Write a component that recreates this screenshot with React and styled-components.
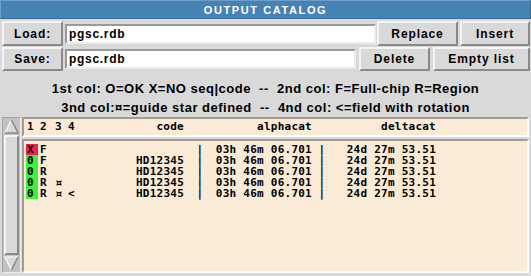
import React from 'react';
import styled, { createGlobalStyle } from 'styled-components';

const GlobalStyle = createGlobalStyle`
  body {
    margin: 0;
    background: #d9d9d9;
  }
`;

// column widths shared by header and rows (px)
const COLS = {
  flag: 12,
  gapA: 2,
  c2: 15,
  c3: 13,
  c4: 12,
  code: 104,
  bar1: 32,
  alpha: 96,
  bar2: 20,
  delta: 104,
};

const rows = [
  { flag: 'X', ok: false, c2: 'F', c3: '', c4: '', code: '' },
  { flag: '0', ok: true, c2: 'F', c3: '', c4: '', code: 'HD12345' },
  { flag: '0', ok: true, c2: 'R', c3: '', c4: '', code: 'HD12345' },
  { flag: '0', ok: true, c2: 'R', c3: '¤', c4: '', code: 'HD12345' },
  { flag: '0', ok: true, c2: 'R', c3: '¤', c4: '<', code: 'HD12345' },
];

const Window = styled.div`
  width: 531px;
  height: 276px;
  display: flex;
  flex-direction: column;
  background: #d9d9d9;
  font-family: 'Liberation Sans', Arial, sans-serif;
  overflow: hidden;
`;

const TitleBar = styled.div`
  height: 17px;
  background: #4682b4;
  border: 1px solid #6f9fc8;
  border-right-color: #3a6d96;
  border-bottom-color: #3a6d96;
  color: #ffffff;
  font-weight: bold;
  font-size: 11px;
  letter-spacing: 1.6px;
  display: flex;
  align-items: center;
  justify-content: center;
`;

const FileRow = styled.div`
  display: flex;
  align-items: center;
  gap: 2px;
  padding: 0 1px 0 2px;
  margin-top: ${({ $top }) => $top}px;
  height: ${({ $h }) => $h}px;
`;

const Button = styled.div`
  box-sizing: border-box;
  width: ${({ $w }) => $w}px;
  height: 100%;
  margin-left: ${({ $ml }) => $ml || 0}px;
  display: flex;
  align-items: center;
  justify-content: center;
  border: 2px solid;
  border-color: #f4f4f4 #8a8a8a #8a8a8a #f4f4f4;
  background: #d9d9d9;
  font-size: 12px;
  font-weight: bold;
  letter-spacing: 0.9px;
  color: #000;
`;

const Entry = styled.div`
  box-sizing: border-box;
  flex: 1;
  height: 20px;
  border: 2px solid;
  border-color: #9a9a9a #ececec #ececec #9a9a9a;
  background: #ffffff;
  font-size: 12px;
  font-weight: bold;
  letter-spacing: 0.7px;
  padding-left: 2px;
  display: flex;
  align-items: center;
`;

const Legend = styled.div`
  margin-top: 8px;
  text-align: center;
  font-size: 13px;
  font-weight: bold;
  line-height: 19px;
  letter-spacing: 0.5px;
  color: #000;
  white-space: pre;
`;

const Lower = styled.div`
  flex: 1;
  display: flex;
  gap: 1px;
  padding: 0 2px 3px 2px;
`;

const Scrollbar = styled.div`
  box-sizing: border-box;
  width: 19px;
  display: flex;
  flex-direction: column;
  border: 1px solid;
  border-color: #a3a3a3 #ececec #ececec #a3a3a3;
  background: #c3c3c3;
  padding: 1px;
`;

const Arrow = styled.svg`
  display: block;
  width: 15px;
  height: 15px;
  flex: none;
`;

const Slider = styled.div`
  flex: 1;
  box-sizing: border-box;
  margin: 1px 0;
  border: 2px solid;
  border-color: #f4f4f4 #8a8a8a #8a8a8a #f4f4f4;
  background: #d9d9d9;
`;

const ListColumn = styled.div`
  flex: 1;
  display: flex;
  flex-direction: column;
  gap: 2px;
`;

const Sunken = styled.div`
  box-sizing: border-box;
  background: #faebd7;
  border: 2px solid;
  border-color: #a59c90 #ffffff #ffffff #a59c90;
  padding: ${({ $pad }) => $pad};
  height: ${({ $h }) => ($h ? `${$h}px` : 'auto')};
  flex: ${({ $grow }) => ($grow ? 1 : 'none')};
`;

const Line = styled.div`
  display: flex;
  height: ${({ $h }) => $h}px;
  line-height: ${({ $h }) => $h}px;
  align-items: center;
  font-family: 'DejaVu Sans Mono', 'Liberation Mono', monospace;
  font-weight: bold;
  font-size: 11px;
  letter-spacing: 0.25px;
  color: #000;
  white-space: pre;
`;

const Cell = styled.span`
  flex: none;
  width: ${({ $w }) => $w}px;
  height: 100%;
  display: flex;
  align-items: center;
  justify-content: ${({ $align }) => $align || 'flex-start'};
  background: ${({ $bg }) => $bg || 'transparent'};
  padding-left: ${({ $pl }) => $pl || 0}px;
  font-size: ${({ $size }) => ($size ? `${$size}px` : 'inherit')};
  box-sizing: border-box;
`;

function UpArrow() {
  return (
    <Arrow viewBox="0 0 15 15">
      <polygon points="7.5,1 14,14 1,14" fill="#d9d9d9" />
      <polyline points="1,14 7.5,1" stroke="#f4f4f4" strokeWidth="1.5" fill="none" />
      <polyline points="7.5,1 14,14 1,14" stroke="#8a8a8a" strokeWidth="1.5" fill="none" />
    </Arrow>
  );
}

function DownArrow() {
  return (
    <Arrow viewBox="0 0 15 15">
      <polygon points="1,1 14,1 7.5,14" fill="#d9d9d9" />
      <polyline points="7.5,14 1,1 14,1" stroke="#f4f4f4" strokeWidth="1.5" fill="none" />
      <polyline points="14,1 7.5,14" stroke="#8a8a8a" strokeWidth="1.5" fill="none" />
    </Arrow>
  );
}

function Columns({ flag, flagBg, c2, c3, c4, code, bar, alpha, delta, bigMark }) {
  return (
    <>
      <Cell $w={COLS.flag} $bg={flagBg} $pl={1}>{flag}</Cell>
      <Cell $w={COLS.gapA} />
      <Cell $w={COLS.c2}>{c2}</Cell>
      <Cell $w={COLS.c3} $size={bigMark ? 12.5 : 0}>{c3}</Cell>
      <Cell $w={COLS.c4}>{c4}</Cell>
      <Cell $w={COLS.code} $align="flex-end">{code}</Cell>
      <Cell $w={COLS.bar1} $align="center">{bar}</Cell>
      <Cell $w={COLS.alpha} $align="flex-end">{alpha}</Cell>
      <Cell $w={COLS.bar2} $align="center">{bar}</Cell>
      <Cell $w={COLS.delta} $align="flex-end">{delta}</Cell>
    </>
  );
}

export default function App() {
  return (
    <>
      <GlobalStyle />
      <Window>
        <TitleBar>OUTPUT CATALOG</TitleBar>

        <FileRow $top={2} $h={25}>
          <Button $w={61}>Load:</Button>
          <Entry>pgsc.rdb</Entry>
          <Button $w={81} $ml={-1}>Replace</Button>
          <Button $w={70}>Insert</Button>
        </FileRow>

        <FileRow $top={1} $h={24}>
          <Button $w={61}>Save:</Button>
          <Entry>pgsc.rdb</Entry>
          <Button $w={71} $ml={1}>Delete</Button>
          <Button $w={97} $ml={1}>Empty list</Button>
        </FileRow>

        <Legend>
          {'1st col: O=OK X=NO seq|code  --  2nd col: F=Full-chip R=Region'}
          {'\n'}
          {'3nd col:¤=guide star defined  --  4nd col: <=field with rotation'}
        </Legend>

        <Lower>
          <Scrollbar>
            <UpArrow />
            <Slider />
            <DownArrow />
          </Scrollbar>
          <ListColumn>
            <Sunken $h={20} $pad="0 0 0 2px">
              <Line $h={16}>
                <Columns
                  flag="1"
                  c2="2"
                  c3="3"
                  c4="4"
                  code="code"
                  bar=""
                  alpha="alphacat"
                  delta="deltacat"
                />
              </Line>
            </Sunken>
            <Sunken $grow $pad="3px 0 0 2px">
              {rows.map((r, i) => (
                <Line key={i} $h={11}>
                  <Columns
                    flag={r.flag}
                    flagBg={r.ok ? '#3df23d' : '#ee1f4f'}
                    c2={r.c2}
                    c3={r.c3}
                    c4={r.c4}
                    code={r.code}
                    bar="|"
                    alpha="03h 46m 06.701"
                    delta="24d 27m 53.51"
                    bigMark
                  />
                </Line>
              ))}
            </Sunken>
          </ListColumn>
        </Lower>
      </Window>
    </>
  );
}
